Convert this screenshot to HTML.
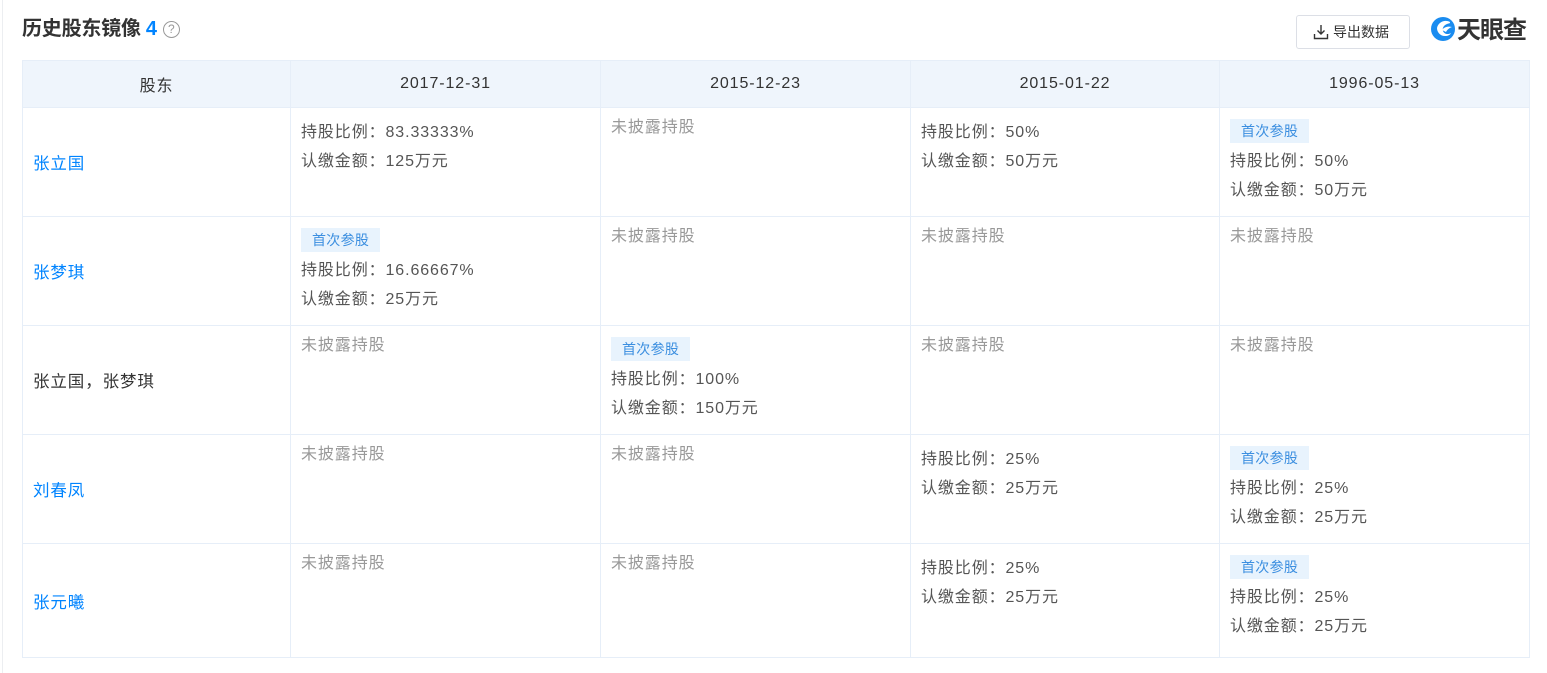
<!DOCTYPE html><html><head><meta charset="utf-8"><style>
*{margin:0;padding:0;box-sizing:border-box}
body{width:1547px;height:673px;background:#fff;font-family:"Liberation Sans","Noto Sans CJK SC",sans-serif;color:#333;position:relative;overflow:hidden}
.lb{position:absolute;left:2px;top:0;width:1px;height:673px;background:#eceef1}
.title{position:absolute;left:22px;top:16px;font-size:20px;font-weight:bold;color:#333;line-height:26px;letter-spacing:-0.2px}
.title .n{color:#0084ff;margin-left:5px}
.q{display:inline-block;width:17px;height:17px;border:1px solid #999;border-radius:50%;font-size:12px;color:#999;text-align:center;line-height:15px;font-weight:normal;vertical-align:2px;margin-left:6px}
.btn{position:absolute;left:1296px;top:15px;width:114px;height:34px;border:1px solid #dcdfe6;border-radius:3px;font-size:14px;line-height:32px;color:#333;padding-left:36px}
.btn svg{position:absolute;left:16px;top:8px}
.logo{position:absolute;left:1430px;top:16px;font-size:24px;font-weight:bold;color:#333;line-height:28px;letter-spacing:-1px}
.logo svg{vertical-align:-4px;margin-right:1px}
table{position:absolute;left:22px;top:60px;border-collapse:collapse;width:1508px;table-layout:fixed}
td,th{border:1px solid #e6eef8;font-size:16px;letter-spacing:0.9px;vertical-align:top;padding:10px 10px 0}
th{background:#eff5fc;height:47px;font-weight:normal;text-align:center;vertical-align:middle;padding:0;color:#333}
td{height:109px}
tr.last td{height:114px}
td.nm{vertical-align:middle;padding:0 10px;color:#0084ff;font-size:16.5px}
td.nm.b{color:#333}
.l{line-height:29px;color:#555}
.u{color:#999;line-height:20px}
.tag{display:inline-block;background:#e8f3fd;color:#3c8fe0;font-size:14px;letter-spacing:0.3px;height:24px;line-height:24px;padding:0 11px;margin:1px 0 4px}
</style></head><body>
<div class="lb"></div>
<div class="title">历史股东镜像<span class="n">4</span><span class="q">?</span></div>
<div class="btn"><svg width="16" height="16" viewBox="0 0 16 16" fill="none" stroke="#333" stroke-width="1.4"><path d="M8 1v9M4.5 6.5 8 10l3.5-3.5M1.5 10v4.5h13V10"/></svg>导出数据</div>
<div class="logo"><svg width="26" height="26" viewBox="0 0 26 26"><circle cx="13" cy="13" r="12" fill="#1a8cf0"/><path d="M20 6c-5-3-12 0-13 6 0 4 3 8 8 8 3 0 5-1 6-3-3 2-7 1-8-2s1-6 4-7c2-1 3 0 3-2z" fill="#fff"/><path d="M12 14c2-3 6-4 10-3-3 1-5 3-6 5z" fill="#fff"/></svg>天眼查</div>
<table>
<colgroup><col style="width:268px"><col style="width:310px"><col style="width:310px"><col style="width:309px"><col style="width:310px"></colgroup>
<tr><th>股东</th><th>2017-12-31</th><th>2015-12-23</th><th>2015-01-22</th><th>1996-05-13</th></tr>
<tr><td class="nm">张立国</td><td><div class="l">持股比例：83.33333%</div><div class="l">认缴金额：125万元</div></td><td><div class="u">未披露持股</div></td><td><div class="l">持股比例：50%</div><div class="l">认缴金额：50万元</div></td><td><span class="tag">首次参股</span><div class="l">持股比例：50%</div><div class="l">认缴金额：50万元</div></td></tr>
<tr><td class="nm">张梦琪</td><td><span class="tag">首次参股</span><div class="l">持股比例：16.66667%</div><div class="l">认缴金额：25万元</div></td><td><div class="u">未披露持股</div></td><td><div class="u">未披露持股</div></td><td><div class="u">未披露持股</div></td></tr>
<tr><td class="nm b">张立国，张梦琪</td><td><div class="u">未披露持股</div></td><td><span class="tag">首次参股</span><div class="l">持股比例：100%</div><div class="l">认缴金额：150万元</div></td><td><div class="u">未披露持股</div></td><td><div class="u">未披露持股</div></td></tr>
<tr><td class="nm">刘春凤</td><td><div class="u">未披露持股</div></td><td><div class="u">未披露持股</div></td><td><div class="l">持股比例：25%</div><div class="l">认缴金额：25万元</div></td><td><span class="tag">首次参股</span><div class="l">持股比例：25%</div><div class="l">认缴金额：25万元</div></td></tr>
<tr class="last"><td class="nm">张元曦</td><td><div class="u">未披露持股</div></td><td><div class="u">未披露持股</div></td><td><div class="l">持股比例：25%</div><div class="l">认缴金额：25万元</div></td><td><span class="tag">首次参股</span><div class="l">持股比例：25%</div><div class="l">认缴金额：25万元</div></td></tr>
</table>
</body></html>
